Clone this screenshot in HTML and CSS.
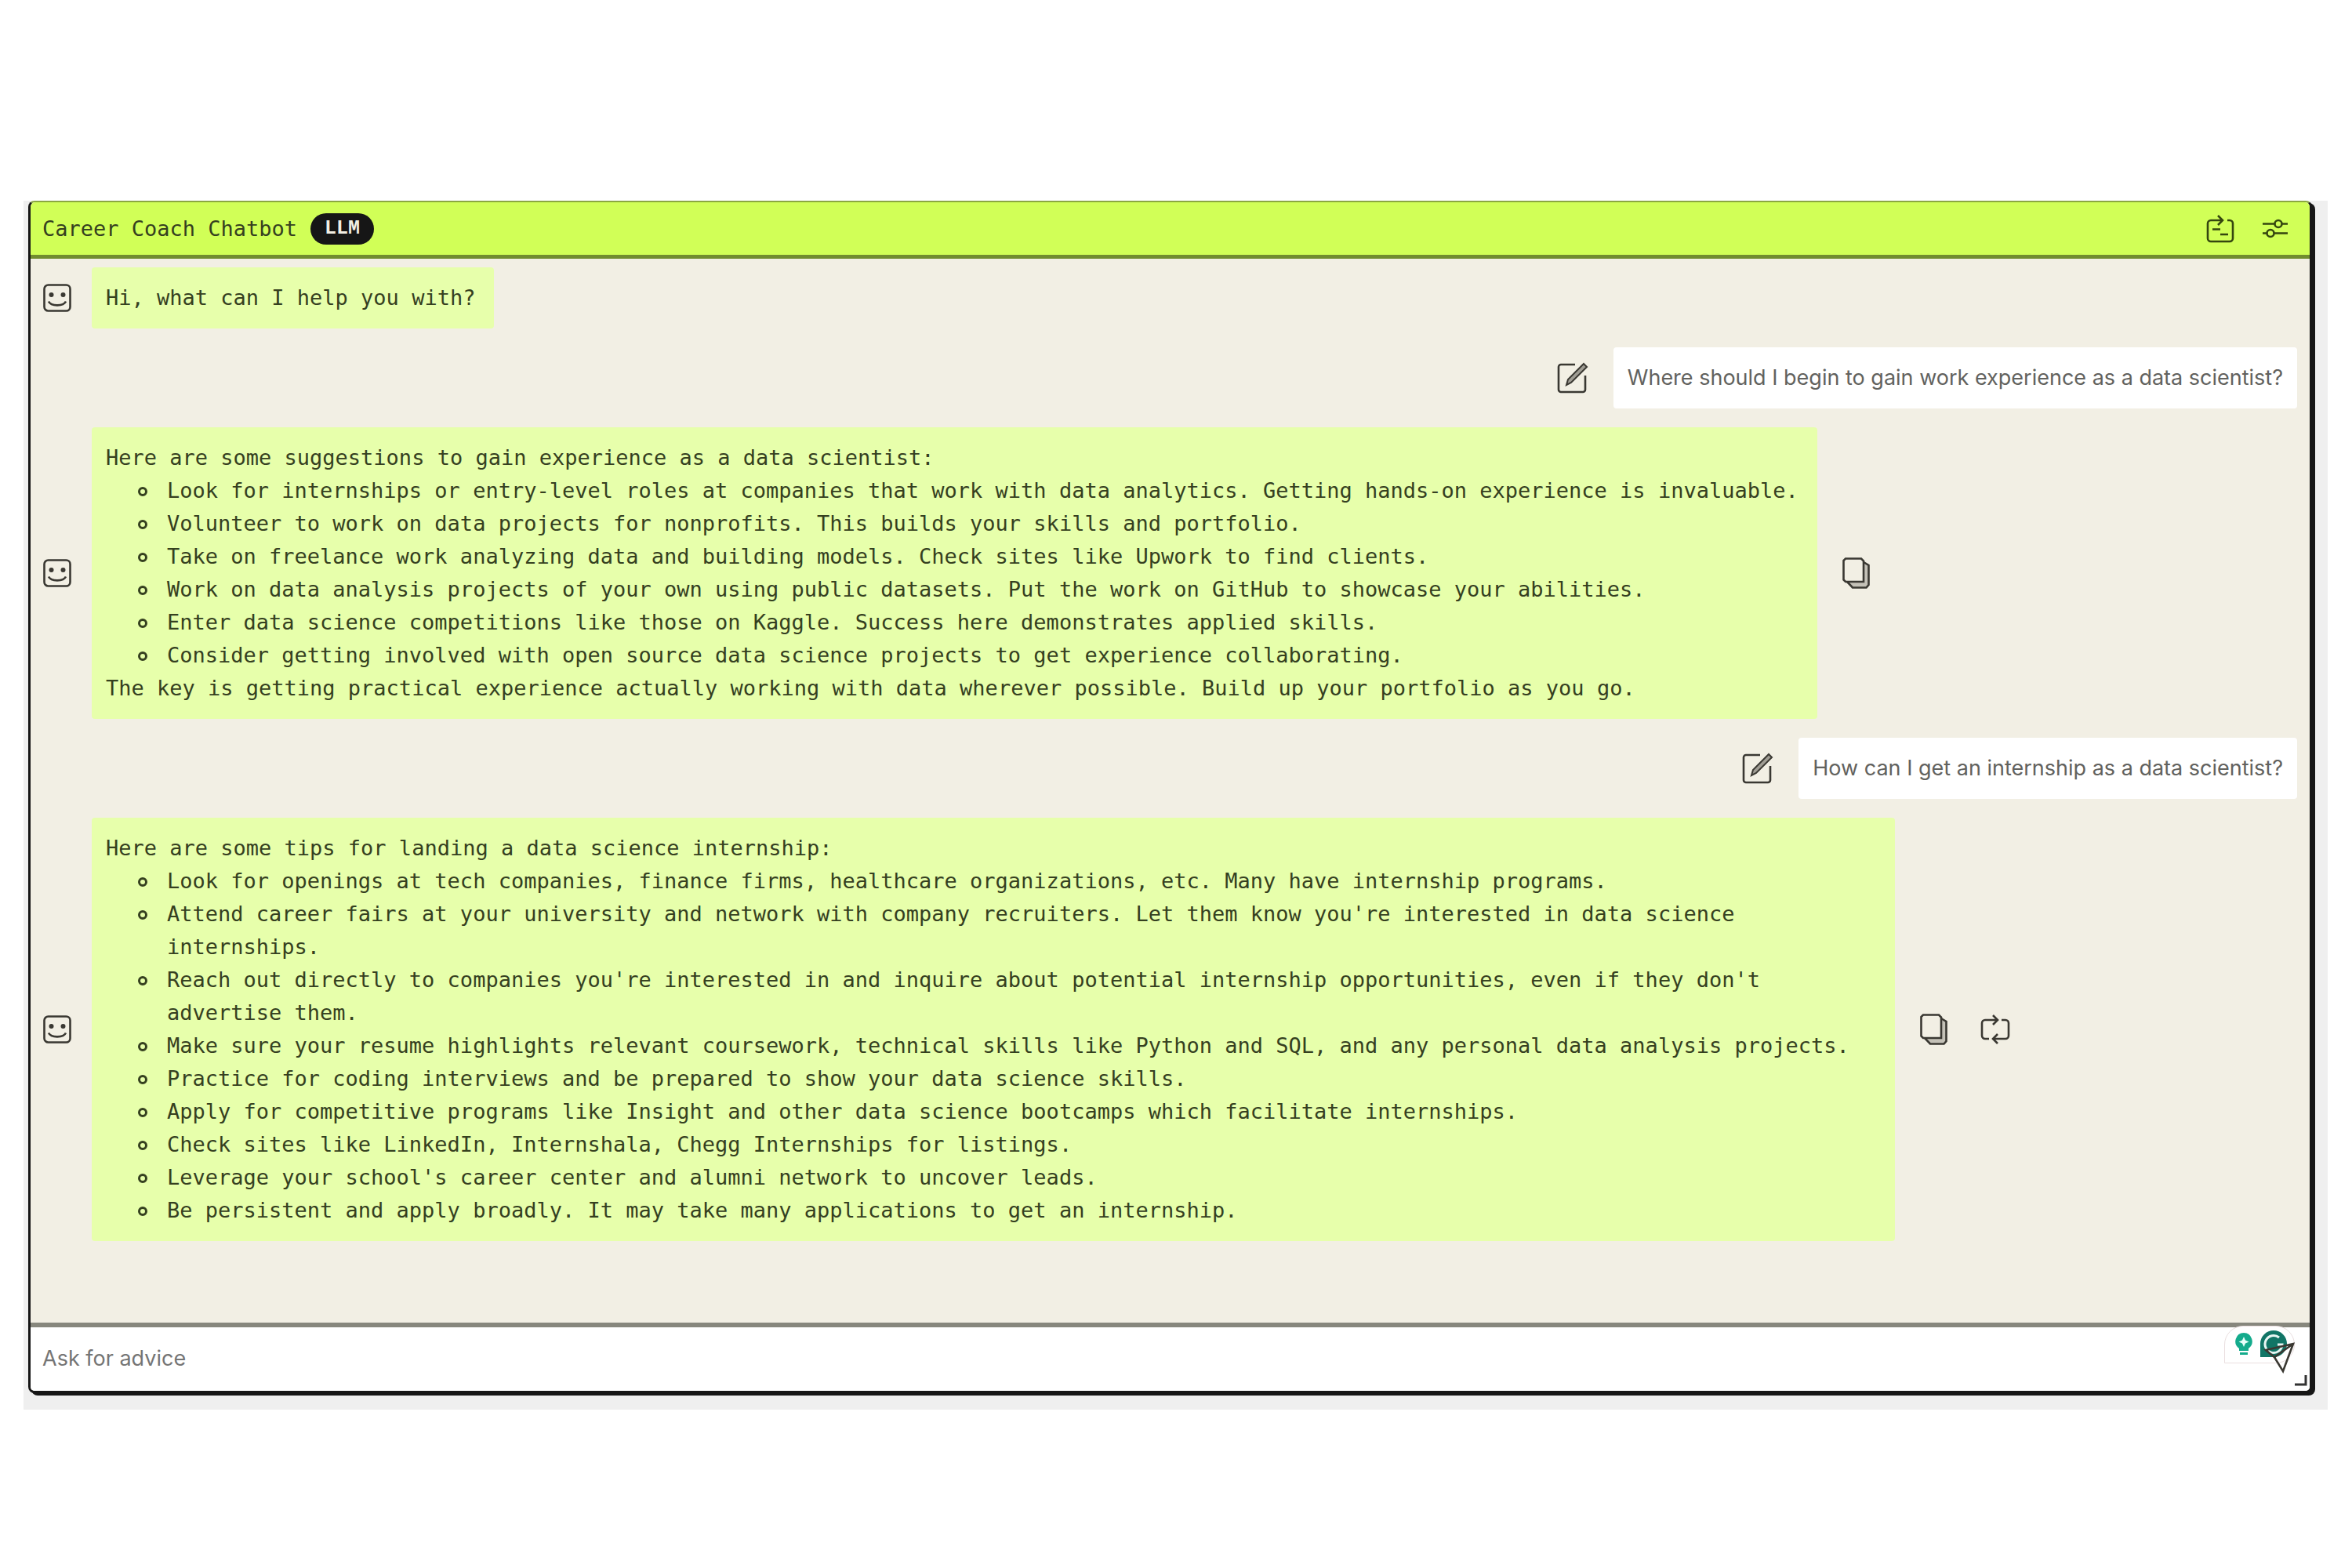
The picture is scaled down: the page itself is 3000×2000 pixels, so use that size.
FILE: index.html
```html
<!DOCTYPE html>
<html lang="en">
<head>
    <meta charset="UTF-8">
    <meta name="viewport" content="width=device-width, initial-scale=1.0">
    <title>Career Coach Chatbot</title>
    <link rel="stylesheet" href="styles.css">
</head>
<body>
    <!-- Shared icon shapes -->
    <svg class="sprite" aria-hidden="true">
        <symbol id="icon-bot" viewBox="0 0 36 36">
            <rect x="1.5" y="1.5" width="33" height="33" rx="5"/>
            <circle class="dot" cx="10.5" cy="14" r="3"/>
            <circle class="dot" cx="25.5" cy="14" r="3"/>
            <path d="M7 22.5c3 6.5 19 6.5 22 0"/>
        </symbol>
        <symbol id="icon-edit" viewBox="0 0 40 40">
            <path d="M23 3H5a3 3 0 0 0-3 3v29a3 3 0 0 0 3 3h28a3 3 0 0 0 3-3V17"/>
            <path class="pencil" d="M12 29l2-7L34 2l4 4L18 26z"/>
        </symbol>
        <symbol id="icon-copy" viewBox="0 0 36 40">
            <path class="shade" d="M27 6l6.500 4v25l-3 3.500H13L6 31h21z"/>
            <path d="M4 1.500h20l3 3V31H4l-2.500-2.500V4z"/>
            <path d="M27 6l6.500 4v25l-3 3.500H13L6 31"/>
        </symbol>
        <symbol id="icon-repeat" viewBox="0 0 38 38">
            <path d="M11 31H6a4 4 0 0 1-4-4V11a4 4 0 0 1 4-4h16M16 1l6 6-6 6"/>
            <path d="M27 7h5a4 4 0 0 1 4 4v16a4 4 0 0 1-4 4H16M22 25l-6 6 6 6"/>
        </symbol>
    </svg>

    <div class="page">
        <main class="panel">
            <header class="header">
                <h1>Career Coach Chatbot</h1>
                <span class="badge">LLM</span>
                <div class="header-actions">
                    <button type="button" aria-label="New chat">
                        <svg class="icon" viewBox="0 0 36 38" width="36" height="38">
                            <path d="M20 8H6a4 4 0 0 0-4 4v19a4 4 0 0 0 4 4h24a4 4 0 0 0 4-4V12a4 4 0 0 0-4-4h-3M15 2l6 6-6 6"/>
                            <path d="M8 19.500h10M18 26h10"/>
                        </svg>
                    </button>
                    <button type="button" aria-label="Settings">
                        <svg class="icon" viewBox="0 0 32 38" width="32" height="38">
                            <path d="M0 12.500h15.500M24.500 12.500H32M0 24.500h5.500M14.500 24.500H32"/>
                            <circle cx="20" cy="12.500" r="4.500"/>
                            <circle cx="10" cy="24.500" r="4.500"/>
                        </svg>
                    </button>
                </div>
            </header>

            <section class="chat">
                <div class="message bot">
                    <svg class="icon avatar"><use href="#icon-bot"/></svg>
                    <div class="bubble">
                        <p>Hi, what can I help you with?</p>
                    </div>
                </div>

                <div class="message user">
                    <button type="button" aria-label="Edit message"><svg class="icon edit"><use href="#icon-edit"/></svg></button>
                    <div class="bubble">
                        <p>Where should I begin to gain work experience as a data scientist?</p>
                    </div>
                </div>

                <div class="message bot">
                    <svg class="icon avatar"><use href="#icon-bot"/></svg>
                    <div class="bubble">
                        <p>Here are some suggestions to gain experience as a data scientist:</p>
                        <ul>
                            <li>Look for internships or entry-level roles at companies that work with data analytics. Getting hands-on experience is invaluable.</li>
                            <li>Volunteer to work on data projects for nonprofits. This builds your skills and portfolio.</li>
                            <li>Take on freelance work analyzing data and building models. Check sites like Upwork to find clients.</li>
                            <li>Work on data analysis projects of your own using public datasets. Put the work on GitHub to showcase your abilities.</li>
                            <li>Enter data science competitions like those on Kaggle. Success here demonstrates applied skills.</li>
                            <li>Consider getting involved with open source data science projects to get experience collaborating.</li>
                        </ul>
                        <p>The key is getting practical experience actually working with data wherever possible. Build up your portfolio as you go.</p>
                    </div>
                    <div class="actions">
                        <button type="button" aria-label="Copy"><svg class="icon copy"><use href="#icon-copy"/></svg></button>
                    </div>
                </div>

                <div class="message user">
                    <button type="button" aria-label="Edit message"><svg class="icon edit"><use href="#icon-edit"/></svg></button>
                    <div class="bubble">
                        <p>How can I get an internship as a data scientist?</p>
                    </div>
                </div>

                <div class="message bot">
                    <svg class="icon avatar"><use href="#icon-bot"/></svg>
                    <div class="bubble">
                        <p>Here are some tips for landing a data science internship:</p>
                        <ul>
                            <li>Look for openings at tech companies, finance firms, healthcare organizations, etc. Many have internship programs.</li>
                            <li>Attend career fairs at your university and network with company recruiters. Let them know you're interested in data science internships.</li>
                            <li>Reach out directly to companies you're interested in and inquire about potential internship opportunities, even if they don't advertise them.</li>
                            <li>Make sure your resume highlights relevant coursework, technical skills like Python and SQL, and any personal data analysis projects.</li>
                            <li>Practice for coding interviews and be prepared to show your data science skills.</li>
                            <li>Apply for competitive programs like Insight and other data science bootcamps which facilitate internships.</li>
                            <li>Check sites like LinkedIn, Internshala, Chegg Internships for listings.</li>
                            <li>Leverage your school's career center and alumni network to uncover leads.</li>
                            <li>Be persistent and apply broadly. It may take many applications to get an internship.</li>
                        </ul>
                    </div>
                    <div class="actions">
                        <button type="button" aria-label="Copy"><svg class="icon copy"><use href="#icon-copy"/></svg></button>
                        <button type="button" aria-label="Regenerate"><svg class="icon repeat"><use href="#icon-repeat"/></svg></button>
                    </div>
                </div>
            </section>

            <form class="composer">
                <textarea rows="1" placeholder="Ask for advice" aria-label="Ask for advice"></textarea>
                <div class="assistant">
                    <svg viewBox="0 0 24 30" width="24" height="30">
                        <path fill="#14ab8c" d="M12 1a11 11 0 0 1 6 20v3H6v-3A11 11 0 0 1 12 1zM7 26h10v3H7z"/>
                        <path fill="#e8fffa" d="M12 6l2 4.500 4.500 2-4.500 2-2 4.500-2-4.500-4.500-2 4.500-2z"/>
                    </svg>
                    <svg viewBox="0 0 36 36" width="36" height="36">
                        <path fill="#117566" d="M18 1a17 17 0 1 1 0 34H1V18A17 17 0 0 1 18 1z"/>
                        <path fill="none" stroke="#e8f6f3" stroke-width="3" d="M25 10a11 11 0 1 0 4 9h-6"/>
                    </svg>
                </div>
                <button type="submit" class="send" aria-label="Send">
                    <svg class="icon" viewBox="0 0 44 42" width="44" height="42">
                        <path d="M5 10L40 2 27 37 16 19zM5 10l11 9L40 2"/>
                    </svg>
                </button>
                <svg class="resize" viewBox="0 0 16 14" width="16" height="14">
                    <path d="M14 0v12H0"/>
                </svg>
            </form>
        </main>
    </div>
</body>
</html>
```

FILE: styles.css
```css
* {
    box-sizing: border-box;
}

body {
    margin: 0;
    padding: 256px 31px 200px 30px;
    background: #fff;
    color: #35401f;
    font-family: "DejaVu Sans Mono", monospace;
    font-size: 27px;
    line-height: 42px;
}

.sprite {
    position: absolute;
    width: 0;
    height: 0;
}

.page {
    padding: 0 20px 21px 6px;
    background: #efefef;
}

.panel {
    border: 3px solid #161616;
    border-top: 2px solid #8ba83f;
    border-radius: 8px;
    background: #f2efe4;
    box-shadow: 4px 3px 0 #161616;
}

button {
    display: flex;
    padding: 0;
    border: none;
    background: none;
    cursor: pointer;
}

.icon {
    fill: none;
    stroke: #3a3832;
    stroke-width: 2.6;
    flex: none;
}

.dot {
    fill: #3a3832;
    stroke: none;
}

.pencil {
    fill: #a09d94;
    stroke-width: 2;
}

.shade {
    fill: #c4c1b7;
    stroke: none;
}

.header {
    display: flex;
    align-items: center;
    gap: 17px;
    height: 72px;
    padding: 0 28px 0 15px;
    border-bottom: 5px solid #718c2f;
    border-radius: 6px 6px 0 0;
    background: #d1ff57;
}

.header h1 {
    margin: 0;
    font-size: 27px;
    font-weight: normal;
}

.header .icon {
    stroke: #35460f;
}

.badge {
    padding: 0 18px;
    border-radius: 20px;
    background: #161616;
    color: #f2efe4;
    font-family: "Liberation Mono", monospace;
    font-size: 25px;
    font-weight: bold;
    line-height: 40px;
}

.header-actions {
    display: flex;
    gap: 36px;
    margin-left: auto;
}

.chat {
    display: flex;
    flex-direction: column;
    gap: 24px;
    padding: 11px 16px 104px;
}

.message {
    display: flex;
    align-items: center;
}

.bubble {
    max-width: 80%;
    padding: 18px;
    border-radius: 4px;
}

.bubble p {
    margin: 0;
}

.bubble ul {
    margin: 0;
    padding-left: 78px;
    list-style: none;
}

.bubble li::before {
    content: "";
    box-sizing: border-box;
    display: inline-block;
    width: 12px;
    height: 12px;
    margin: 0 25px 2px -37px;
    border: 3px solid #35401f;
    border-radius: 50%;
}

.bot .bubble {
    margin-left: 26px;
    padding-right: 24px;
    background: #e7ffab;
}

.user {
    justify-content: flex-end;
    gap: 32px;
}

.user .bubble {
    background: #fff;
    color: #62625e;
    font-family: Inter, sans-serif;
}

.avatar {
    width: 36px;
    height: 36px;
}

.edit {
    width: 40px;
    height: 40px;
}

.copy {
    width: 36px;
    height: 40px;
}

.repeat {
    width: 38px;
    height: 38px;
}

.actions {
    display: flex;
    align-items: center;
    gap: 41px;
    margin-left: 32px;
}

.composer {
    position: relative;
    display: flex;
    align-items: center;
    padding: 19px 17px 20px 15px;
    border-top: 6px solid #87877d;
    border-radius: 0 0 5px 5px;
    background: #fff;
}

.composer textarea {
    flex: 1;
    height: 42px;
    padding: 0;
    border: none;
    outline: none;
    resize: none;
    overflow: hidden;
    background: none;
    font: 27px/42px Inter, sans-serif;
}

.composer textarea::placeholder {
    color: #757575;
}

/* Writing assistant widget floats over the composer */
.assistant {
    position: absolute;
    top: -2px;
    right: 19px;
    display: flex;
    align-items: center;
    gap: 8px;
    padding: 4px 8px 6px 12px;
    border: 1px solid #eadfe0;
    border-radius: 24px 24px 24px 0;
    background: #fff;
}

.send {
    position: relative;
}

.resize {
    position: absolute;
    right: 3px;
    bottom: 6px;
    fill: none;
    stroke: #333;
    stroke-width: 3;
}
```
